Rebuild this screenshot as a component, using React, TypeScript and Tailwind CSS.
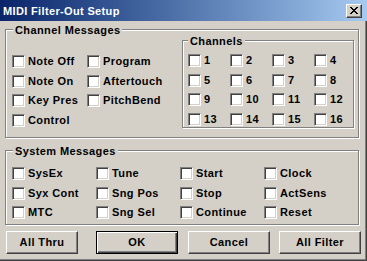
import clsx from 'clsx';
import type { ReactNode } from 'react';

const text = "font-['Liberation_Sans',Arial,sans-serif] text-[11px] leading-[13px] font-bold tracking-[0.4px]";

function Check({ label }: { label: string }) {
    return (
        <label className="flex h-[13px] items-center gap-[3px] whitespace-nowrap">
            <span className="h-[13px] w-[13px] shrink-0 border border-t-[#808080] border-l-[#808080] border-r-white border-b-white bg-white shadow-[inset_1px_1px_0_#404040,inset_-1px_-1px_0_#d4d0c8]" />
            <span>{label}</span>
        </label>
    );
}

function Group({ title, labelClass, className, children }: { title: string; labelClass: string; className: string; children: ReactNode }) {
    return (
        <div className={clsx('relative shrink-0 border border-[#808080] shadow-[inset_1px_1px_0_#fff,1px_1px_0_#fff]', className)}>
            <span className={clsx('absolute top-[-6px] bg-[#d4d0c8] px-[2px]', labelClass)}>{title}</span>
            {children}
        </div>
    );
}

function Btn({ label, isDefault, className }: { label: string; isDefault?: boolean; className: string }) {
    return (
        <button
            className={clsx(
                'flex h-[23px] shrink-0 items-center justify-center bg-[#d4d0c8]',
                isDefault
                    ? 'border border-black shadow-[inset_1px_1px_0_#fff,inset_-1px_-1px_0_#404040,inset_-2px_-2px_0_#808080]'
                    : 'border border-t-white border-l-white border-r-[#404040] border-b-[#404040] shadow-[inset_-1px_-1px_0_#808080]',
                className,
            )}
        >
            {label}
        </button>
    );
}

const channelMsgs = ['Note Off', 'Program', 'Note On', 'Aftertouch', 'Key Pres', 'PitchBend', 'Control'];
const systemMsgs = ['SysEx', 'Tune', 'Start', 'Clock', 'Syx Cont', 'Sng Pos', 'Stop', 'ActSens', 'MTC', 'Sng Sel', 'Continue', 'Reset'];

export default function App() {
    return (
        <div className={clsx('relative h-[261px] w-[367px] overflow-hidden bg-[#d4d0c8] text-black shadow-[inset_-1px_-1px_0_#404040,inset_-2px_-2px_0_#808080]', text)}>
            {/* title bar */}
            <div className="flex h-[21px] items-center bg-gradient-to-r from-[#0a246a] to-[#a6caf0] pl-[3px] pr-[5px]">
                <span className="mt-[1px] tracking-[0.35px] text-white">MIDI Filter-Out Setup</span>
                <span className="ml-auto flex h-[14px] w-[16px] items-center justify-center border border-t-white border-l-white border-r-[#404040] border-b-[#404040] bg-[#d4d0c8] shadow-[inset_-1px_-1px_0_#808080]">
                    <svg width="8" height="7" viewBox="0 0 8 7" shapeRendering="crispEdges">
                        <path d="M0 0h2v1h-2zM6 0h2v1h-2zM1 1h2v1h-2zM5 1h2v1h-2zM2 2h4v1h-4zM3 3h2v1h-2zM2 4h4v1h-4zM1 5h2v1h-2zM5 5h2v1h-2zM0 6h2v1h-2zM6 6h2v1h-2z" fill="#000" />
                    </svg>
                </span>
            </div>

            <div className="flex flex-col px-[5px]">
                <Group title="Channel Messages" labelClass="left-[7px]" className="mt-[8px] flex h-[109px] w-[354px]">
                    <div className="grid flex-1 grid-cols-[75px_auto] content-start gap-y-[6.5px] pl-[6px] pt-[25px]">
                        {channelMsgs.map(m => <Check key={m} label={m} />)}
                    </div>
                    <Group title="Channels" labelClass="left-[5px]" className="mr-[4px] mt-[10px] h-[88px] w-[172px]">
                        <div className="grid grid-cols-[42px_42px_42px_42px] gap-y-[6.5px] pl-[5px] pt-[13px]">
                            {Array.from({ length: 16 }, (_, i) => <Check key={i} label={String(i + 1)} />)}
                        </div>
                    </Group>
                </Group>

                <Group title="System Messages" labelClass="left-[7px]" className="mt-[12px] h-[75px] w-[354px]">
                    <div className="grid grid-cols-[84px_84px_84px_84px] gap-y-[6.5px] pl-[6px] pt-[16px]">
                        {systemMsgs.map(m => <Check key={m} label={m} />)}
                    </div>
                </Group>

                <div className="mt-[6px] flex">
                    <Btn label="All Thru" className="ml-[1px] w-[72px]" />
                    <Btn label="OK" isDefault className="ml-[18px] w-[82px]" />
                    <Btn label="Cancel" className="ml-[10px] w-[82px]" />
                    <Btn label="All Filter" className="ml-[9px] w-[82px]" />
                </div>
            </div>
        </div>
    );
}
